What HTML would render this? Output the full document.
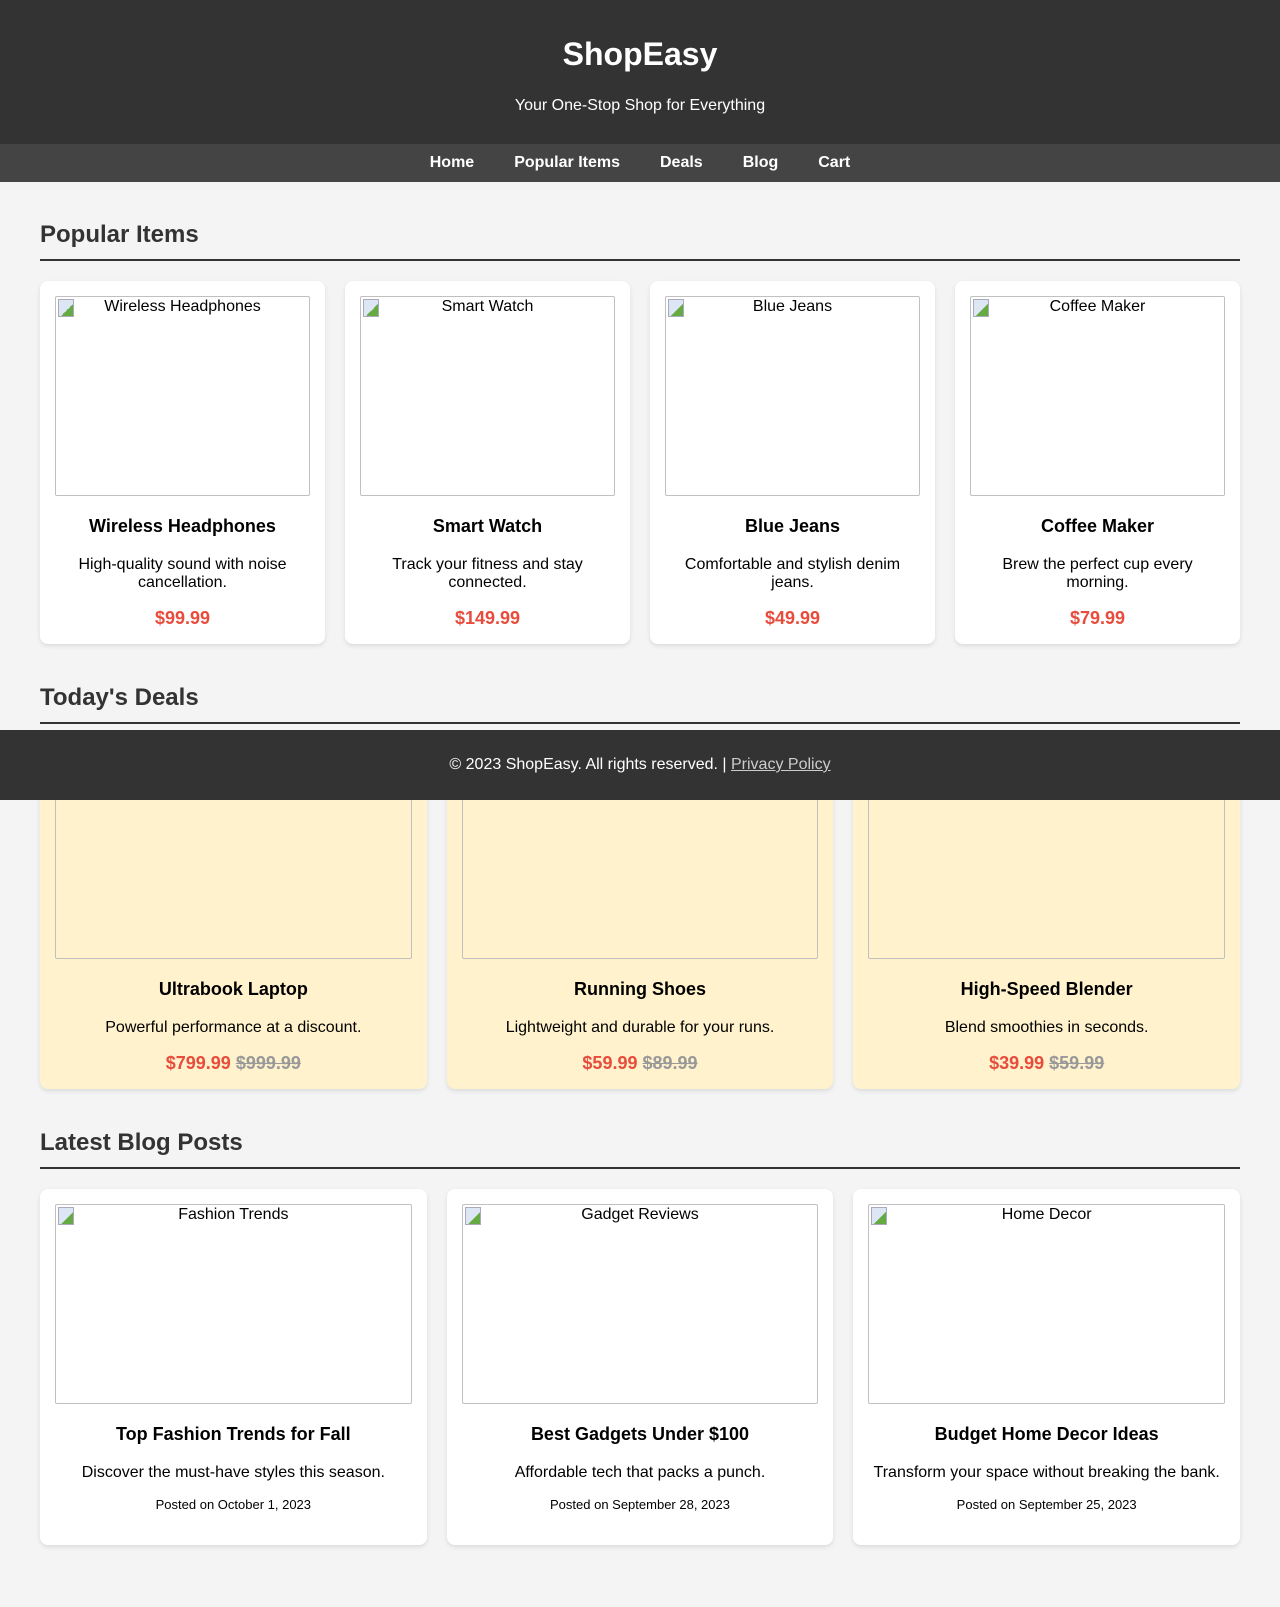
<!DOCTYPE html>
<html><head><meta charset="utf-8"><style>
*{box-sizing:border-box}
body{margin:0;background:#f4f4f4;font-family:"Liberation Sans",Arial,sans-serif;color:#000;height:1607px;position:relative}
header{background:#333;color:#fff;height:144px;text-align:center;position:relative}
header h1{position:absolute;left:0;right:0;top:34px;margin:0;font-size:32px;line-height:40px}
header p{position:absolute;left:0;right:0;top:96px;margin:0;font-size:16px;line-height:20px}
nav{background:#444;height:38px;text-align:center;line-height:38px}
nav a{color:#fff;font-weight:bold;text-decoration:none;margin:0 20px;font-size:16px}
.sec{width:1200px;margin:0 auto}
h2{font-size:24px;color:#333;margin:0;line-height:28px;padding-bottom:10px;border-bottom:2px solid #333}
.grid{display:grid;gap:20px;margin-top:20px}
.g4{grid-template-columns:repeat(4,1fr)}
.g3{grid-template-columns:repeat(3,1fr)}
.card{background:#fff;border-radius:8px;box-shadow:0 2px 5px rgba(0,0,0,.1);padding:15px 15px 0;text-align:center}
.deal{background:#fff2cc}
.img{height:200px;border:1px solid #c0c0c0;border-radius:2px;font-size:16px;line-height:20px;padding-top:0;position:relative}
.img::before{content:"";position:absolute;left:2px;top:2px;width:14px;height:16px;background:linear-gradient(135deg,#dde6f4 60%,#6a4 60%);border:1px solid #aab}
h3{font-size:18px;margin:19px 0 0;line-height:22px}
.d{font-size:16px;margin:19px 0 0;line-height:18px}
.pr{font-size:18px;font-weight:bold;color:#e74c3c;margin:15px 0 0;padding-bottom:15px;line-height:22px}
.old{color:#999;text-decoration:line-through}
.posted{font-size:13px;margin:15px 0 0;padding-bottom:33px}
footer{position:absolute;left:0;right:0;top:730px;height:70px;background:#333;color:#fff;text-align:center;line-height:70px;font-size:16px}
footer a{color:#ccc;text-decoration:underline}
</style></head><body>
<header><h1>ShopEasy</h1><p>Your One-Stop Shop for Everything</p></header>
<nav><a>Home</a><a>Popular Items</a><a>Deals</a><a>Blog</a><a>Cart</a></nav>
<div class="sec" style="padding-top:39px">
<h2>Popular Items</h2>
<div class="grid g4">
<div class="card"><div class="img">Wireless Headphones</div><h3>Wireless Headphones</h3><p class="d">High-quality sound with noise cancellation.</p><p class="pr">$99.99</p></div>
<div class="card"><div class="img">Smart Watch</div><h3>Smart Watch</h3><p class="d">Track your fitness and stay connected.</p><p class="pr">$149.99</p></div>
<div class="card"><div class="img">Blue Jeans</div><h3>Blue Jeans</h3><p class="d">Comfortable and stylish denim jeans.</p><p class="pr">$49.99</p></div>
<div class="card"><div class="img">Coffee Maker</div><h3>Coffee Maker</h3><p class="d">Brew the perfect cup every morning.</p><p class="pr">$79.99</p></div>
</div></div>
<div class="sec" style="margin-top:40px">
<h2>Today's Deals</h2>
<div class="grid g3">
<div class="card deal"><div class="img">Ultrabook Laptop</div><h3>Ultrabook Laptop</h3><p class="d">Powerful performance at a discount.</p><p class="pr">$799.99 <span class="old">$999.99</span></p></div>
<div class="card deal"><div class="img">Running Shoes</div><h3>Running Shoes</h3><p class="d">Lightweight and durable for your runs.</p><p class="pr">$59.99 <span class="old">$89.99</span></p></div>
<div class="card deal"><div class="img">High-Speed Blender</div><h3>High-Speed Blender</h3><p class="d">Blend smoothies in seconds.</p><p class="pr">$39.99 <span class="old">$59.99</span></p></div>
</div></div>
<div class="sec" style="margin-top:40px">
<h2>Latest Blog Posts</h2>
<div class="grid g3">
<div class="card"><div class="img">Fashion Trends</div><h3>Top Fashion Trends for Fall</h3><p class="d">Discover the must-have styles this season.</p><p class="posted">Posted on October 1, 2023</p></div>
<div class="card"><div class="img">Gadget Reviews</div><h3>Best Gadgets Under $100</h3><p class="d">Affordable tech that packs a punch.</p><p class="posted">Posted on September 28, 2023</p></div>
<div class="card"><div class="img">Home Decor</div><h3>Budget Home Decor Ideas</h3><p class="d">Transform your space without breaking the bank.</p><p class="posted">Posted on September 25, 2023</p></div>
</div></div>
<footer>© 2023 ShopEasy. All rights reserved. | <a>Privacy Policy</a></footer>
</body></html>
